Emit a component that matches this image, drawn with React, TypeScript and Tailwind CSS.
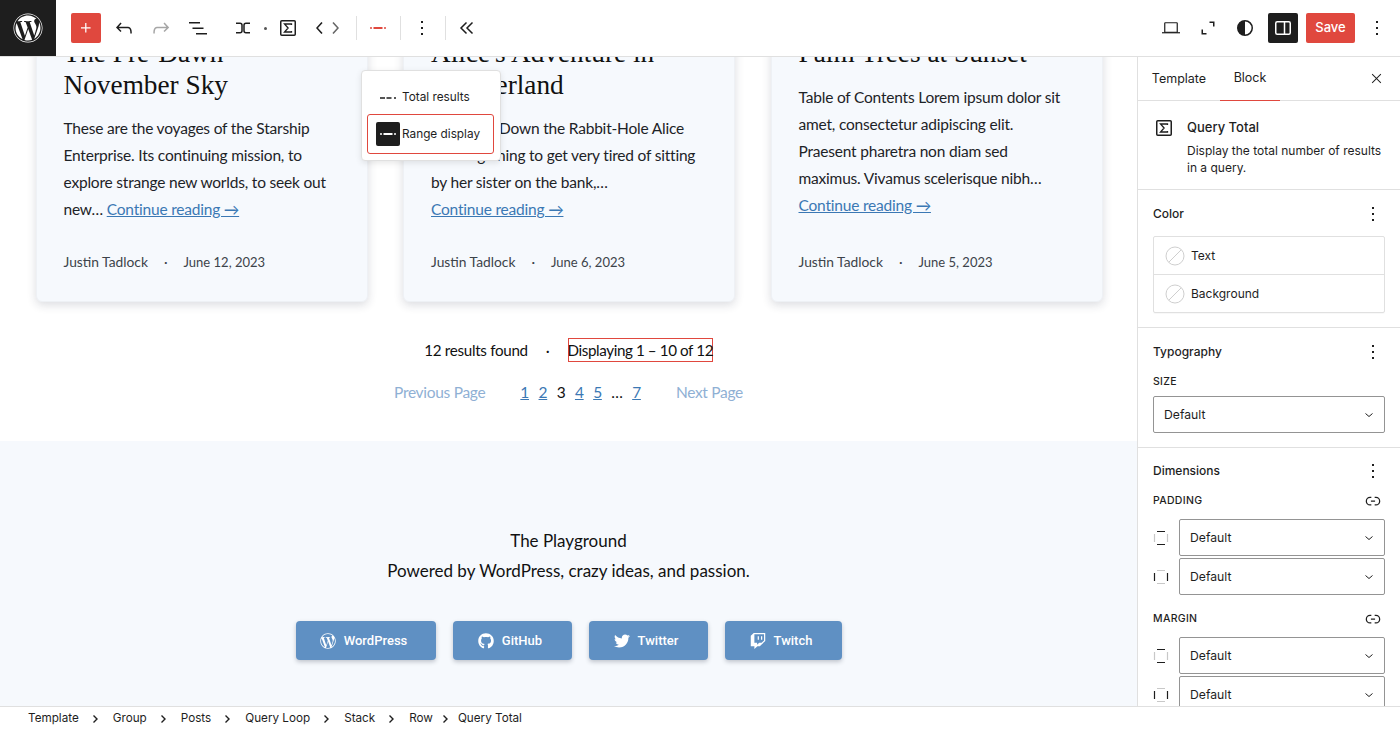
import React from 'react';
import { FaWordpress, FaWordpressSimple, FaGithub, FaTwitter, FaTwitch } from 'react-icons/fa';

const RED = 'bg-[#e0483e]';

const Ico: React.FC<{ d: string; className?: string }> = ({ d, className = 'w-6 h-6 text-[#1e1e1e]' }) => (
    <svg viewBox="0 0 24 24" fill="currentColor" className={className}><path d={d} /></svg>
);

const KEBAB = 'M13 19h-2v-2h2v2zm0-6h-2v-2h2v2zm0-6h-2V5h2v2z';
const LINK = 'M10 17.389H8.444A5.194 5.194 0 1 1 8.444 7H10v1.5H8.444a3.694 3.694 0 0 0 0 7.389H10v1.5ZM14 7h1.556a5.194 5.194 0 0 1 0 10.39H14v-1.5h1.556a3.694 3.694 0 0 0 0-7.39H14V7Zm-4.5 6h5v-1.5h-5V13Z';

const Sigma = ({ className = 'w-6 h-6' }: { className?: string }) => (
    <svg viewBox="0 0 24 24" className={className} fill="none" stroke="#1e1e1e" strokeWidth="1.5">
        <rect x="4.75" y="4.75" width="14.5" height="14.5" rx="1" />
        <path d="M15.5 9V8h-7l3.6 4-3.6 4h7v-1" strokeWidth="1.3" />
    </svg>
);

const Dashes = ({ color = '#1e1e1e', solid = false }: { color?: string; solid?: boolean }) => (
    <svg viewBox="0 0 24 24" className="w-6 h-6" fill={color}>
        {solid ? (
            <>
                <rect x="4" y="11.25" width="2" height="1.5" />
                <rect x="7.5" y="11" width="9" height="2" />
                <rect x="18" y="11.25" width="2" height="1.5" />
            </>
        ) : (
            <>
                <rect x="4" y="11.25" width="5" height="1.5" />
                <rect x="10.5" y="11.25" width="5" height="1.5" />
                <rect x="18" y="11.25" width="2" height="1.5" />
            </>
        )}
    </svg>
);

const TopBar = () => (
    <header className="h-[57px] shrink-0 flex items-start bg-white border-b border-[#e0e0e0]">
        <div className="w-14 h-14 bg-[#1e1e1e] flex items-center justify-center text-white">
            <FaWordpress className="w-[30px] h-[30px]" />
        </div>
        <div className="flex items-center h-14 pl-[15px] flex-1">
            <div className={`w-[30px] h-[30px] ${RED} rounded-[2px] flex items-center justify-center`}>
                <Ico d="M11 12.5V17.5H12.5V12.5H17.5V11H12.5V6H11V11H6V12.5H11Z" className="w-5 h-5 text-white" />
            </div>
            <div className="ml-[11px] w-6 h-6"><Ico d="M18.3 11.7c-.6-.6-1.4-.9-2.3-.9H6.7l2.9-3.3-1.1-1-4.5 5L8.5 16l1-1-2.7-2.7H16c.5 0 .9.2 1.3.5 1 1 1 3.4 1 4.5v.3h1.5v-.2c0-1.5 0-4.3-1.5-5.7z" /></div>
            <div className="ml-[13px] w-6 h-6"><Ico d="M15.6 6.5l-1.1 1 2.9 3.3H8c-.9 0-1.7.3-2.3.9-1.4 1.5-1.4 4.2-1.4 5.6v.2h1.5v-.3c0-1.1 0-3.5 1-4.5.3-.3.7-.5 1.3-.5h9.2L14.5 15l1.1 1.1 4.6-4.6-4.6-5z" className="w-6 h-6 text-[#a6a6a6]" /></div>
            <div className="ml-[13px] w-6 h-6"><Ico d="M3 6h11v1.5H3V6Zm3.5 5.5h11V13h-11v-1.5ZM21 17H10v1.5h11V17Z" /></div>
            <svg viewBox="0 0 24 24" className="ml-[21px] w-6 h-6" fill="none" stroke="#1e1e1e" strokeWidth="1.5">
                <path d="M5 7.25h4a2 2 0 0 1 2 2v5.5a2 2 0 0 1-2 2H5" />
                <path d="M19 7.25h-4a2 2 0 0 0-2 2v5.5a2 2 0 0 0 2 2h4" />
            </svg>
            <span className="ml-[9px] w-[3px] h-[3px] rounded-full bg-[#555]" />
            <div className="ml-[9px]"><Sigma /></div>
            <div className="ml-[8px] flex items-center">
                <Ico d="M14.6 7l-1.2-1L8 12l5.4 6 1.2-1-4.6-5z" className="w-6 h-6 text-[#1e1e1e]" />
                <Ico d="M10.6 6L9.4 7l4.6 5-4.6 5 1.2 1 5.4-6z" className="-ml-[9px] w-6 h-6 text-[#666]" />
            </div>
            <span className="ml-[9px] w-px h-6 bg-[#e0e0e0]" />
            <div className="ml-[9px]"><Dashes color="#e0483e" solid /></div>
            <span className="ml-[10px] w-px h-6 bg-[#e0e0e0]" />
            <div className="ml-[9px] w-6 h-6"><Ico d={KEBAB} /></div>
            <span className="ml-[11px] w-px h-6 bg-[#e0e0e0]" />
            <svg viewBox="0 0 24 24" className="ml-[9px] w-6 h-6" fill="none" stroke="#1e1e1e" strokeWidth="1.5">
                <path d="M11.5 6.5 6 12l5.5 5.5M17.5 6.5 12 12l5.5 5.5" />
            </svg>
            <div className="ml-auto flex items-center">
                <svg viewBox="0 0 24 24" className="w-6 h-6" fill="none" stroke="#1e1e1e" strokeWidth="1.2">
                    <path d="M5.75 7.25a.5.5 0 0 1 .5-.5h11.5a.5.5 0 0 1 .5.5v9H5.75v-9Z" /><path d="M3 16.75h18" />
                </svg>
                <svg viewBox="0 0 24 24" className="ml-[13px] w-6 h-6" fill="none" stroke="#1e1e1e" strokeWidth="1.5">
                    <path d="M13.5 6.25h4.25v4.25M10.5 17.75H6.25V13.5" />
                </svg>
                <svg viewBox="0 0 24 24" className="ml-[13px] w-6 h-6">
                    <circle cx="12" cy="12" r="7.25" fill="none" stroke="#1e1e1e" strokeWidth="1.5" />
                    <path d="M12 4.75a7.25 7.25 0 0 0 0 14.5Z" fill="#1e1e1e" />
                </svg>
                <div className="ml-[11px] w-[30px] h-[30px] bg-[#1e1e1e] rounded-[2px] flex items-center justify-center">
                    <svg viewBox="0 0 24 24" className="w-6 h-6" fill="none" stroke="#fff" strokeWidth="1.5">
                        <rect x="4.75" y="5.75" width="14.5" height="12.5" rx="1.5" /><path d="M13.5 5.75v12.5" />
                    </svg>
                </div>
                <button className={`ml-2 w-[49px] h-[30px] ${RED} rounded-[2px] text-white text-[13px] font-medium`}>Save</button>
                <div className="ml-[10px] mr-[11px] w-6 h-6"><Ico d={KEBAB} /></div>
            </div>
        </div>
    </header>
);

const Meta = ({ date }: { date: string }) => (
    <div className="mt-auto flex items-center text-[13.8px] leading-5 text-[#3c434a]">
        <span>Justin Tadlock</span>
        <span className="mx-[16px]">·</span>
        <span className="text-[13px]">{date}</span>
    </div>
);

const Card: React.FC<{ title: string[]; lines: string[]; date: string; inlineLink?: boolean }> = ({ title, lines, date, inlineLink }) => (
    <article className="w-[332px] h-[305px] shrink-0 bg-[#f6f9fd] rounded-md border border-[#eef1f5] shadow-[0_3px_10px_rgba(30,40,60,0.16)] pt-[39px] pl-[27px] pb-[29px] flex flex-col">
        <h2 className="font-['Liberation_Serif',serif] text-[27.3px] leading-8 text-[#111] whitespace-nowrap">
            {title.map(t => <div key={t}>{t}</div>)}
        </h2>
        <div className={`${title.length === 1 ? 'mt-[15px]' : 'mt-[14px]'} text-[15.5px] leading-[27px] tracking-[-0.2px] text-[#1d2327] whitespace-nowrap`}>
            {lines.map(l => <div key={l}>{l}</div>)}
            {inlineLink ? (
                <div>new… <a className="text-[#3b78b4] underline">Continue reading →</a></div>
            ) : (
                <div><a className="text-[#3b78b4] underline">Continue reading →</a></div>
            )}
        </div>
        <Meta date={date} />
    </article>
);

const SocialButton: React.FC<{ w: string; icon: React.ReactNode; label: string }> = ({ w, icon, label }) => (
    <a className={`${w} h-[39px] pr-[4px] bg-[#5f90c3] rounded-[4px] shadow-[0_2px_4px_rgba(30,40,60,0.25)] flex items-center justify-center gap-2 text-white text-[13px] font-medium font-['Roboto',sans-serif]`}>
        {icon}
        <span>{label}</span>
    </a>
);

const Canvas = () => (
    <main className="relative flex-1 overflow-hidden bg-white font-['Lato',sans-serif]">
        <div className="-mt-[60px] flex gap-[35.5px] px-[35.5px]">
            <Card title={['The Pre-Dawn', 'November Sky']} lines={['These are the voyages of the Starship', 'Enterprise. Its continuing mission, to', 'explore strange new worlds, to seek out']} date="June 12, 2023" inlineLink />
            <Card title={["Alice's Adventure in", 'Wonderland']} lines={['Chapter I. Down the Rabbit-Hole Alice', 'was beginning to get very tired of sitting', 'by her sister on the bank,…']} date="June 6, 2023" />
            <Card title={['Palm Trees at Sunset']} lines={['Table of Contents Lorem ipsum dolor sit', 'amet, consectetur adipiscing elit.', 'Praesent pharetra non diam sed', 'maximus. Vivamus scelerisque nibh…']} date="June 5, 2023" />
        </div>

        <div className="mt-9 h-6 flex items-center justify-center text-[15.2px] leading-[22px] text-[#111]">
            <span className="tracking-[-0.3px]">12 results found</span>
            <span className="mx-[18px]">·</span>
            <span className="h-6 w-[145px] border border-[#e0483e] flex items-center justify-center whitespace-nowrap tracking-[-0.4px]">Displaying 1 – 10 of 12</span>
        </div>

        <div className="mt-[19px] h-6 flex items-center justify-center text-[15.5px] tracking-[-0.3px]">
            <span className="text-[#8fb0d4]">Previous Page</span>
            <div className="mx-[35px] flex gap-[9.5px] text-[#3b78b4]">
                <a className="underline">1</a><a className="underline">2</a><span className="text-[#111]">3</span><a className="underline">4</a><a className="underline">5</a><span className="text-[#111]">…</span><a className="underline">7</a>
            </div>
            <span className="text-[#8fb0d4]">Next Page</span>
        </div>

        <footer className="mt-9 h-[300px] bg-[#f6f9fd] pt-[85px] flex flex-col items-center text-[17px] leading-[30px] text-[#111]">
            <div>The Playground</div>
            <div>Powered by WordPress, crazy ideas, and passion.</div>
            <div className="mt-[35px] flex gap-[17px]">
                <SocialButton w="w-[140px]" icon={<FaWordpressSimple className="w-4 h-4" />} label="WordPress" />
                <SocialButton w="w-[119px]" icon={<FaGithub className="w-4 h-4" />} label="GitHub" />
                <SocialButton w="w-[119px]" icon={<FaTwitter className="w-4 h-4" />} label="Twitter" />
                <SocialButton w="w-[117px]" icon={<FaTwitch className="w-4 h-4" />} label="Twitch" />
            </div>
        </footer>

        {/* variation popover */}
        <div className="absolute left-[361px] top-[13px] w-[140px] h-[91px] bg-white border border-[#e0e0e0] rounded-[4px] shadow-[0_2px_6px_rgba(0,0,0,0.1)] pt-[15px] pl-[5px] font-['Inter',sans-serif] text-[11.8px] text-[#1e1e1e]">
            <div className="h-6 flex items-center pl-[9px] gap-[2px]">
                <Dashes /><span>Total results</span>
            </div>
            <div className="mt-[4px] w-[127px] h-10 border-[1.5px] border-[#e0483e] rounded-[3px] flex items-center pl-[8px] gap-[2px]">
                <div className="w-6 h-6 bg-[#1e1e1e] rounded-[2px]"><Dashes color="#fff" solid /></div>
                <span className="pt-px">Range display</span>
            </div>
        </div>
    </main>
);

const Section: React.FC<{ title: string; pb: string; children: React.ReactNode }> = ({ title, pb, children }) => (
    <section className={`border-b border-[#e0e0e0] px-[15px] ${pb}`}>
        <div className="h-6 flex items-center justify-between text-[#1e1e1e] text-[12px] font-medium">
            <span>{title}</span>
            <Ico d={KEBAB} className="w-6 h-6 text-[#1e1e1e]" />
        </div>
        {children}
    </section>
);

const Select: React.FC<{ className?: string }> = ({ className = '' }) => (
    <div className={`h-[37px] border border-[#949494] rounded-[2px] flex items-center justify-between pl-[10px] pr-[9px] text-[12.2px] text-[#1e1e1e] ${className}`}>
        <span className="pt-px">Default</span>
        <svg viewBox="0 0 12 12" className="w-3 h-3" fill="none" stroke="#1e1e1e" strokeWidth="1"><path d="M2.5 4.5 6 7.5l3.5-3" /></svg>
    </div>
);

const ColorRow: React.FC<{ label: string; border?: boolean }> = ({ label, border }) => (
    <div className={`${border ? 'h-[38px] border-b border-[#e0e0e0]' : 'h-[37px]'} flex items-center pl-[11px] gap-[6px] text-[12px] text-[#1e1e1e]`}>
        <svg viewBox="0 0 20 20" className="w-5 h-5" fill="none" stroke="#cfcfcf" strokeWidth="1">
            <circle cx="10" cy="10" r="9" /><path d="M3.8 16.2 16.2 3.8" />
        </svg>
        <span>{label}</span>
    </div>
);

const SideIcon: React.FC<{ vertical: boolean }> = ({ vertical }) => (
    <svg viewBox="0 0 16 16" className="w-4 h-4 shrink-0" fill="none" strokeWidth="1.2">
        <path d="M4 1.5h8M4 14.5h8" stroke={vertical ? '#1e1e1e' : '#c8c8c8'} />
        <path d="M1.5 4v8M14.5 4v8" stroke={vertical ? '#c8c8c8' : '#1e1e1e'} />
    </svg>
);

const SpacingGroup: React.FC<{ label: string }> = ({ label }) => (
    <>
        <div className="h-6 flex items-center justify-between">
            <span className="text-[10.5px] font-medium tracking-[0.3px] text-[#1e1e1e]">{label}</span>
            <Ico d={LINK} className="w-5 h-5 text-[#1e1e1e] mr-[2px]" />
        </div>
        <div className="mt-[6px] flex items-center gap-[10px]"><SideIcon vertical /><Select className="flex-1" /></div>
        <div className="mt-[2px] flex items-center gap-[10px]"><SideIcon vertical={false} /><Select className="flex-1" /></div>
    </>
);

const Sidebar = () => (
    <aside className="w-[263px] shrink-0 border-l border-[#e0e0e0] bg-white overflow-hidden">
        <div className="h-[44px] border-b border-[#e0e0e0] flex items-center text-[12.5px] text-[#1e1e1e]">
            <div className="w-[82px] h-full flex items-center justify-center pt-px">Template</div>
            <div className="w-[60px] h-[44px] flex items-center justify-center pt-px border-b border-[#e0483e]">Block</div>
            <Ico d="m13.06 12 6.47-6.47-1.06-1.06L12 10.94 5.53 4.47 4.47 5.53 10.94 12l-6.47 6.47 1.06 1.06L12 13.06l6.47 6.47 1.06-1.06L13.06 12Z" className="ml-auto mr-[16px] w-[15px] h-[15px] text-[#1e1e1e]" />
        </div>
        <div className="h-[89px] border-b border-[#e0e0e0] pl-[14px] pt-[16px] flex">
            <Sigma className="w-6 h-6 shrink-0 -mt-[1px]" />
            <div className="ml-[11px] w-[205px]">
                <div className="text-[13px] font-medium leading-5 text-[#1e1e1e]">Query Total</div>
                <div className="mt-[5px] text-[12px] leading-[17px] text-[#1e1e1e]">Display the total number of results in a query.</div>
            </div>
        </div>
        <div className="pt-[12px]">
            <Section title="Color" pb="pb-[14px]">
                <div className="mt-[10px] border border-[#e0e0e0] rounded-[2px] shadow-[0_1px_1px_rgba(0,0,0,0.03)]">
                    <ColorRow label="Text" border />
                    <ColorRow label="Background" />
                </div>
            </Section>
        </div>
        <div className="pt-[12px]">
            <Section title="Typography" pb="pb-[14px]">
                <div className="mt-[11px] h-[14px] flex items-center text-[10.5px] font-medium tracking-[0.3px] text-[#1e1e1e]">SIZE</div>
                <Select className="mt-[7px]" />
            </Section>
        </div>
        <div className="pt-[11px] px-[15px]">
            <div className="h-6 flex items-center justify-between text-[#1e1e1e] text-[12px] font-medium">
                <span>Dimensions</span>
                <Ico d={KEBAB} className="w-6 h-6 text-[#1e1e1e]" />
            </div>
            <div className="mt-[6px]"><SpacingGroup label="PADDING" /></div>
            <div className="mt-[12px]"><SpacingGroup label="MARGIN" /></div>
        </div>
    </aside>
);

const CrumbChevron: React.FC<{ className: string }> = ({ className }) => (
    <svg viewBox="0 0 8 10" className={`w-2 h-[10px] ${className}`} fill="none" stroke="#1e1e1e" strokeWidth="1.4"><path d="M2.5 1.5 6 5 2.5 8.5" /></svg>
);

const Crumbs = () => (
    <footer className="h-[23px] shrink-0 border-t border-[#e0e0e0] bg-white flex items-center pl-7 pt-px text-[11.7px] text-[#1e1e1e]">
        {['Template', 'Group', 'Posts', 'Query Loop', 'Stack'].map(c => (
            <React.Fragment key={c}>
                <span>{c}</span>
                <CrumbChevron className="ml-[12px] mr-[14px]" />
            </React.Fragment>
        ))}
        <span>Row</span>
        <CrumbChevron className="ml-[8px] mr-[9px]" />
        <span>Query Total</span>
    </footer>
);

export default function App() {
    return (
        <div className="w-[1400px] h-[729px] flex flex-col overflow-hidden bg-white font-['Inter',sans-serif]">
            <TopBar />
            <div className="flex flex-1 min-h-0">
                <Canvas />
                <Sidebar />
            </div>
            <Crumbs />
        </div>
    );
}
